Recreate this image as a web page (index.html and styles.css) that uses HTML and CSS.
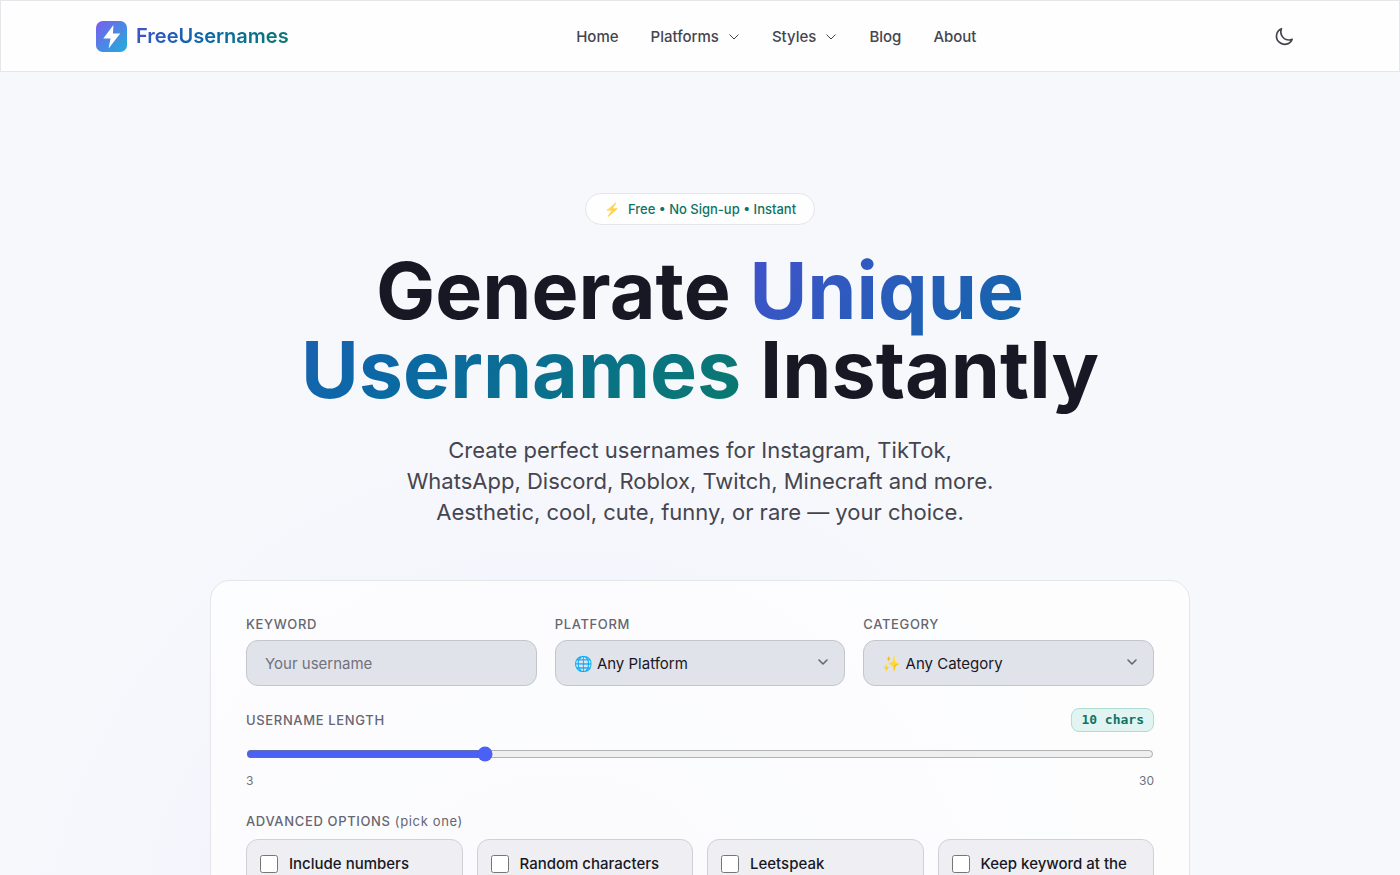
FILE: index.html
```html
<!DOCTYPE html>
<html lang="en">
<head>
  <meta charset="UTF-8" />
  <meta name="viewport" content="width=device-width, initial-scale=1.0" />
  <title>FreeUsernames</title>
  <link rel="stylesheet" href="styles.css">
</head>
<body>
  <header class="header">
    <div class="header-inner">
      <a href="#" class="logo">
        <svg class="logo-icon" viewBox="0 0 32 32" aria-hidden="true">
          <defs>
            <linearGradient id="logo-grad" x1="0" y1="0" x2="1" y2="1">
              <stop offset="0" stop-color="#7c5cf0" />
              <stop offset="1" stop-color="#1eb0d8" />
            </linearGradient>
          </defs>
          <rect width="32" height="32" rx="7" fill="url(#logo-grad)" />
          <path d="M18 4 7.500 18H15l-2 10.500L25 13H17.500z" fill="#fff" />
        </svg>
        <span class="logo-text">FreeUsernames</span>
      </a>

      <nav class="nav">
        <a href="#">Home</a>
        <a href="#">Platforms
          <svg class="chevron" viewBox="0 0 12 12" aria-hidden="true"><path d="M1.500 4.500 6 9 10.500 4.500" /></svg>
        </a>
        <a href="#">Styles
          <svg class="chevron" viewBox="0 0 12 12" aria-hidden="true"><path d="M1.500 4.500 6 9 10.500 4.500" /></svg>
        </a>
        <a href="#">Blog</a>
        <a href="#">About</a>
      </nav>

      <button class="theme-toggle" type="button" aria-label="Toggle dark mode">
        <svg viewBox="0 0 24 24" aria-hidden="true"><path d="M21.750 16A9.700 9.700 0 0 1 18 16.750 9.750 9.750 0 0 1 9 3.250a9.750 9.750 0 1 0 12.750 12.750z" /></svg>
      </button>
    </div>
  </header>

  <main class="hero">
    <div class="badge"><span class="badge-icon">⚡</span>Free • No Sign-up • Instant</div>
    <h1>Generate <span class="gradient">Unique Usernames</span> Instantly</h1>
    <p class="subtitle">Create perfect usernames for Instagram, TikTok, WhatsApp, Discord, Roblox, Twitch, Minecraft and more. Aesthetic, cool, cute, funny, or rare — your choice.</p>

    <form class="generator">
      <div class="fields">
        <div class="field">
          <label for="keyword">Keyword</label>
          <input type="text" id="keyword" class="control" placeholder="Your username" />
        </div>
        <div class="field">
          <label for="platform">Platform</label>
          <div class="select-wrap">
            <select id="platform" class="control">
              <option>🌐 Any Platform</option>
            </select>
            <svg class="select-arrow" viewBox="0 0 12 12" aria-hidden="true"><path d="M2 4 6 8 10 4" /></svg>
          </div>
        </div>
        <div class="field">
          <label for="category">Category</label>
          <div class="select-wrap">
            <select id="category" class="control">
              <option>✨ Any Category</option>
            </select>
            <svg class="select-arrow" viewBox="0 0 12 12" aria-hidden="true"><path d="M2 4 6 8 10 4" /></svg>
          </div>
        </div>
      </div>

      <div class="length">
        <div class="length-head">
          <label for="length">Username length</label>
          <output id="length-value" class="length-value" for="length">10 chars</output>
        </div>
        <input type="range" id="length" min="3" max="30" value="10" />
        <div class="length-scale"><span>3</span><span>30</span></div>
      </div>

      <fieldset class="options">
        <legend>Advanced options <span class="hint">(pick one)</span></legend>
        <div class="option-grid">
          <label class="option"><input type="checkbox" /><span>Include numbers</span></label>
          <label class="option"><input type="checkbox" /><span>Random characters</span></label>
          <label class="option"><input type="checkbox" /><span>Leetspeak</span></label>
          <label class="option"><input type="checkbox" /><span>Keep keyword at the start</span></label>
        </div>
      </fieldset>
    </form>
  </main>

  <script>
    const range = document.getElementById('length');
    const lengthValue = document.getElementById('length-value');

    range.addEventListener('input', function () {
      lengthValue.textContent = range.value + ' chars';
    });
  </script>
</body>
</html>
```
FILE: styles.css
```css
* {
  box-sizing: border-box;
}

body {
  margin: 0;
  font-family: Inter, "Noto Sans", sans-serif;
  color: #181824;
  background: #f7f8fc;
}

a {
  color: inherit;
  text-decoration: none;
}

svg {
  fill: none;
}

/* Header */
.header {
  background: #fefefe;
  border: 1px solid #e5e6ea;
}

.header-inner {
  display: flex;
  align-items: center;
  justify-content: space-between;
  max-width: 1256px;
  height: 70px;
  margin: 0 auto;
  padding: 0 24px;
}

.logo {
  display: flex;
  align-items: center;
  gap: 9px;
  font-size: 20px;
  font-weight: 600;
}

.logo-icon {
  width: 31px;
  height: 31px;
}

.logo-text,
.gradient {
  background: linear-gradient(135deg, #4352cc 0%, #0b68a6 50%, #0a7a6c 100%);
  -webkit-background-clip: text;
  background-clip: text;
  color: transparent;
}

.nav {
  display: flex;
  gap: 32px;
  font-size: 15px;
  font-weight: 500;
  color: #45454f;
}

.nav a {
  display: flex;
  align-items: center;
  gap: 9px;
}

.chevron {
  width: 12px;
  height: 12px;
  stroke: currentColor;
}

.theme-toggle {
  display: flex;
  align-items: center;
  justify-content: center;
  width: 40px;
  height: 40px;
  padding: 0;
  border: none;
  background: none;
  color: #45454f;
  cursor: pointer;
}

.theme-toggle svg {
  width: 20px;
  height: 20px;
  stroke: currentColor;
  stroke-width: 2;
  stroke-linejoin: round;
}

/* Hero */
.hero {
  display: flex;
  flex-direction: column;
  align-items: center;
  padding: 121px 24px 80px;
  background: radial-gradient(circle 540px at 40% 900px, #eeeffd 0%, #f7f8fc 100%);
}

.badge {
  display: flex;
  align-items: center;
  gap: 8px;
  height: 32px;
  padding: 0 18px;
  border: 1px solid #e5e6ea;
  border-radius: 16px;
  background: #fefefe;
  color: #0c7467;
  font-size: 13px;
  font-weight: 500;
}

.badge-icon {
  opacity: 0.8;
}

h1 {
  max-width: 880px;
  margin: 26px 0;
  font-size: 79px;
  font-weight: 700;
  line-height: 79px;
  text-align: center;
}

.subtitle {
  max-width: 600px;
  margin: 0 0 52px;
  color: #45454f;
  font-size: 22px;
  line-height: 31px;
  text-align: center;
}

/* Generator */
.generator {
  width: 100%;
  max-width: 980px;
  padding: 35px;
  border: 1px solid #e5e6ea;
  border-radius: 20px;
  background: rgba(255, 255, 255, 0.7);
}

.fields {
  display: grid;
  grid-template-columns: repeat(3, 1fr);
  gap: 18px;
}

.field label,
.length-head label,
legend {
  color: #666670;
  font-size: 13px;
  font-weight: 500;
  line-height: 16px;
  letter-spacing: 0.05em;
  text-transform: uppercase;
}

.field {
  display: flex;
  flex-direction: column;
  gap: 8px;
}

.control {
  width: 100%;
  height: 46px;
  padding: 0 18px;
  border: 1px solid #c4c6ce;
  border-radius: 12px;
  background: #e1e3eb;
  color: #181824;
  font-family: inherit;
  font-size: 15px;
}

.control::placeholder {
  color: #70727c;
}

.select-wrap {
  position: relative;
}

select.control {
  appearance: none;
}

.select-arrow {
  position: absolute;
  top: 16px;
  right: 16px;
  width: 12px;
  height: 12px;
  stroke: #666670;
  stroke-width: 1.6;
  stroke-linecap: round;
  stroke-linejoin: round;
  pointer-events: none;
}

.length {
  margin-top: 22px;
}

.length-head {
  display: flex;
  align-items: center;
  justify-content: space-between;
}

.length-value {
  padding: 3px 9px;
  border: 1px solid #aeddd6;
  border-radius: 8px;
  background: #e2f4f2;
  color: #0c7467;
  font-family: "DejaVu Sans Mono", monospace;
  font-size: 13px;
  font-weight: 700;
  line-height: 16px;
}

input[type="range"] {
  display: block;
  width: 100%;
  margin: 14px 0 11px;
  accent-color: #4b60f5;
}

.length-scale {
  display: flex;
  justify-content: space-between;
  color: #70727c;
  font-size: 12px;
  line-height: 16px;
}

.options {
  margin: 24px 0 0;
  padding: 0;
  border: none;
}

legend {
  padding: 0;
}

.hint {
  font-weight: 400;
  text-transform: none;
}

.option-grid {
  display: grid;
  grid-template-columns: repeat(4, 1fr);
  gap: 14px;
  padding-top: 10px;
}

.option {
  display: flex;
  align-items: flex-start;
  gap: 11px;
  padding: 13px;
  border: 1px solid #d0d1d8;
  border-radius: 12px;
  background: rgba(225, 226, 232, 0.5);
  font-size: 15px;
  font-weight: 500;
  line-height: 22px;
}

.option input {
  flex-shrink: 0;
  width: 18px;
  height: 18px;
  margin: 2px 0 0;
}

@media (max-width: 800px) {
  .nav {
    display: none;
  }

  h1 {
    font-size: 48px;
    line-height: 52px;
  }

  .fields {
    grid-template-columns: 1fr;
  }

  .option-grid {
    grid-template-columns: repeat(2, 1fr);
  }
}
```
